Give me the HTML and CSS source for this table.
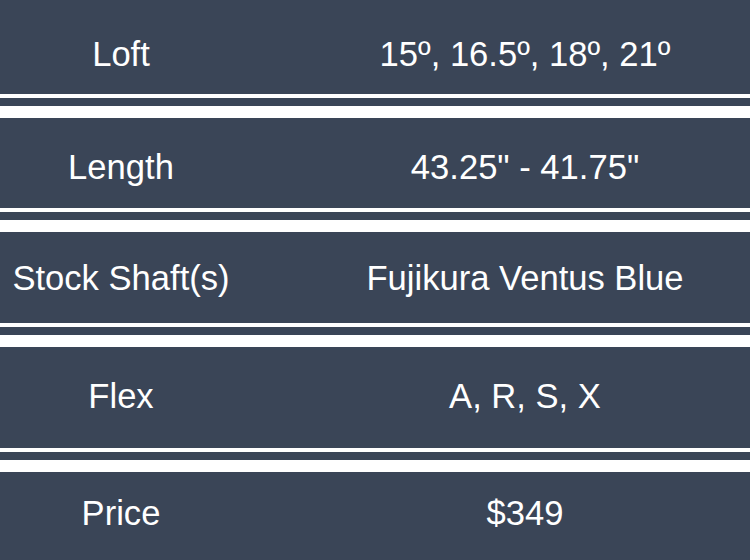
FILE: index.html
```html
<!DOCTYPE html>
<html>
<head>
<meta charset="utf-8">
<link rel="stylesheet" href="styles.css">
</head>
<body>
<div class="specs">
  <div class="row row-1"><div class="label">Loft</div><div class="value">15º, 16.5º, 18º, 21º</div></div>
  <div class="sep"></div>
  <div class="row row-2"><div class="label">Length</div><div class="value">43.25" - 41.75"</div></div>
  <div class="sep"></div>
  <div class="row row-3"><div class="label">Stock Shaft(s)</div><div class="value">Fujikura Ventus Blue</div></div>
  <div class="sep"></div>
  <div class="row row-4"><div class="label">Flex</div><div class="value">A, R, S, X</div></div>
  <div class="sep"></div>
  <div class="row row-5"><div class="label">Price</div><div class="value">$349</div></div>
</div>
</body>
</html>
```

FILE: styles.css
```css
html, body {
  margin: 0;
  padding: 0;
  background: #ffffff;
}
.specs {
  width: 750px;
  height: 560px;
  display: flex;
  flex-direction: column;
  overflow: hidden;
  font-family: "Liberation Sans", Arial, sans-serif;
  font-size: 34.6px;
  color: #ffffff;
}
.row {
  background: #3a4557;
  display: grid;
  grid-template-columns: 242px 1fr;
  column-gap: 58px;
  align-items: center;
  box-sizing: border-box;
  flex: none;
}
.label, .value {
  text-align: center;
  white-space: nowrap;
  line-height: 1;
}
.row-1 { height: 94px; padding-top: 15px; }
.row-2 { height: 90px; padding-top: 8px; }
.row-3 { height: 91px; padding-top: 1px; }
.row-4 { height: 101px; padding-bottom: 3px; }
.row-5 { height: 88px; padding-bottom: 5px; }
.sep {
  flex: none;
  height: 8px;
  background: #3a4557;
  border-top: 4px solid #ffffff;
  border-bottom: 12px solid #ffffff;
}
```
